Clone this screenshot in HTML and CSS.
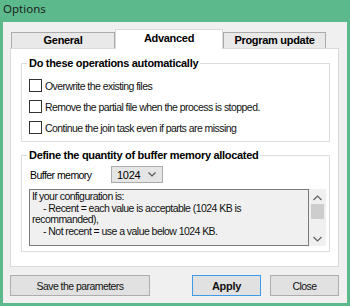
FILE: index.html
```html
<!DOCTYPE html>
<html lang="en">
<head>
    <meta charset="UTF-8">
    <meta name="viewport" content="width=device-width, initial-scale=1.0">
    <title>Options</title>
    <link rel="stylesheet" href="styles.css">
</head>
<body>
    <div class="window">
        <div class="titlebar">Options</div>
        <div class="client">
            <div class="tabs">
                <div class="tab tab-general">General</div>
                <div class="tab tab-advanced active">Advanced</div>
                <div class="tab tab-update">Program update</div>
            </div>
            <div class="page">
                <fieldset class="group group-auto">
                    <legend>Do these operations automatically</legend>
                    <label class="check"><span class="box"></span>Overwrite the existing files</label>
                    <label class="check"><span class="box"></span>Remove the partial file when the process is stopped.</label>
                    <label class="check"><span class="box"></span>Continue the join task even if parts are missing</label>
                </fieldset>
                <fieldset class="group group-buffer">
                    <legend>Define the quantity of buffer memory allocated</legend>
                    <div class="buffer-row">
                        <span class="buffer-label">Buffer memory</span>
                        <div class="combo">
                            <span>1024</span>
                            <svg width="8" height="5" viewBox="0 0 8 5"><path d="M0.5 0.5 L4 4 L7.5 0.5" fill="none" stroke="#555" stroke-width="1.2"/></svg>
                        </div>
                    </div>
                    <div class="memo">
                        <div class="memo-text">
                            <div>If your configuration is:</div>
                            <div class="indent">- Recent = each value is acceptable (1024 KB is</div>
                            <div>recommanded),</div>
                            <div class="indent">- Not recent = use a value below 1024 KB.</div>
                        </div>
                        <div class="scrollbar">
                            <svg width="9" height="6" viewBox="0 0 9 6"><path d="M0.5 5 L4.5 1 L8.5 5" fill="none" stroke="#606060" stroke-width="1.2"/></svg>
                            <div class="thumb"></div>
                            <svg class="down" width="9" height="6" viewBox="0 0 9 6"><path d="M0.5 1 L4.5 5 L8.5 1" fill="none" stroke="#606060" stroke-width="1.2"/></svg>
                        </div>
                    </div>
                </fieldset>
            </div>
            <div class="buttons">
                <button class="btn btn-save">Save the parameters</button>
                <button class="btn btn-apply">Apply</button>
                <button class="btn btn-close">Close</button>
            </div>
        </div>
    </div>
</body>
</html>
```

FILE: styles.css
```css
body {
    margin: 0;
    background-color: #5cb98c;
    font-family: "Liberation Sans", Arial, sans-serif;
    font-size: 10.5px;
    letter-spacing: -0.55px;
    color: #000;
}
.window {
    width: 350px;
    height: 306px;
}
.titlebar {
    height: 22px;
    padding-left: 3px;
    line-height: 17px;
    font-family: "Noto Sans", sans-serif;
    font-size: 11.5px;
    letter-spacing: 0;
    color: #1e1e1e;
    box-sizing: border-box;
}
.client {
    margin: 0 3px;
    height: 281px;
    background-color: #f0f0f0;
    padding: 7px 0 0 7px;
    box-sizing: border-box;
}
.tabs {
    display: flex;
    align-items: flex-end;
    height: 19px;
    padding-left: 1px;
}
.tab {
    height: 16px;
    box-sizing: border-box;
    border: 1px solid #acacac;
    border-bottom: none;
    background-color: #e9e9e9;
    font-size: 11px;
    font-weight: bold;
    letter-spacing: -0.3px;
    text-align: center;
    line-height: 15px;
}
.tab-general {
    width: 104px;
}
.tab-advanced {
    width: 108px;
}
.tab-update {
    width: 103px;
}
.tab.active {
    height: 20px;
    margin-bottom: -1px;
    background-color: #fff;
    border-color: #d9d9d9;
    position: relative;
    z-index: 1;
    line-height: 17px;
}
.page {
    width: 329px;
    height: 219px;
    box-sizing: border-box;
    border: 1px solid #d9d9d9;
    background-color: #fff;
    padding: 0 8px 0 10px;
}
.group {
    margin: 8px 0 0;
    border: 1px solid #dcdcdc;
    padding: 0;
}
.group legend {
    margin-left: -2px;
    padding: 0 2px;
    font-size: 11px;
    font-weight: bold;
    letter-spacing: -0.3px;
    line-height: 13px;
}
.group-auto {
    padding: 5px 0 3px 7px;
}
.check {
    display: flex;
    align-items: center;
    height: 21px;
    color: #111;
}
.box {
    width: 13px;
    height: 13px;
    box-sizing: border-box;
    border: 1px solid #333;
    background-color: #fff;
    margin-right: 3px;
}
.group-buffer {
    margin-top: 7px;
    padding: 4px 0 5px 7px;
}
.buffer-row {
    display: flex;
    align-items: center;
    height: 17px;
}
.buffer-label {
    width: 81px;
    padding-left: 1px;
}
.combo {
    width: 52px;
    height: 17px;
    box-sizing: border-box;
    border: 1px solid #acacac;
    background-color: #e5e5e5;
    display: flex;
    align-items: center;
    justify-content: space-between;
    padding: 0 6px 0 5px;
    font-size: 11px;
    letter-spacing: -0.3px;
}
.memo {
    display: flex;
    margin-top: 6px;
    height: 57px;
}
.memo-text {
    width: 280px;
    box-sizing: border-box;
    border: 1px solid #7a7a7a;
    background-color: #f0f0f0;
    padding: 1px 2px 0;
    line-height: 11.5px;
    overflow: hidden;
    color: #111;
}
.indent {
    padding-left: 11px;
}
.scrollbar {
    width: 17px;
    display: flex;
    flex-direction: column;
    align-items: center;
    padding-top: 6px;
    box-sizing: border-box;
    background-color: #f0f0f0;
}
.thumb {
    width: 13px;
    height: 15px;
    margin-top: 3px;
    background-color: #cdcdcd;
}
.scrollbar .down {
    margin-top: auto;
    margin-bottom: 4px;
}
.buttons {
    display: flex;
    width: 329px;
    margin-top: 8px;
    gap: 9px;
}
.btn {
    height: 21px;
    box-sizing: border-box;
    border: 1px solid #adadad;
    background-color: #e1e1e1;
    font-family: "Liberation Sans", Arial, sans-serif;
    font-size: 10.5px;
    letter-spacing: -0.55px;
    color: #111;
    padding: 0;
}
.btn-save {
    width: 140px;
}
.btn-apply {
    width: 69px;
    margin-left: auto;
    border-color: #3f9bea;
    font-size: 11px;
    font-weight: bold;
    letter-spacing: -0.3px;
}
.btn-close {
    width: 69px;
}
```
